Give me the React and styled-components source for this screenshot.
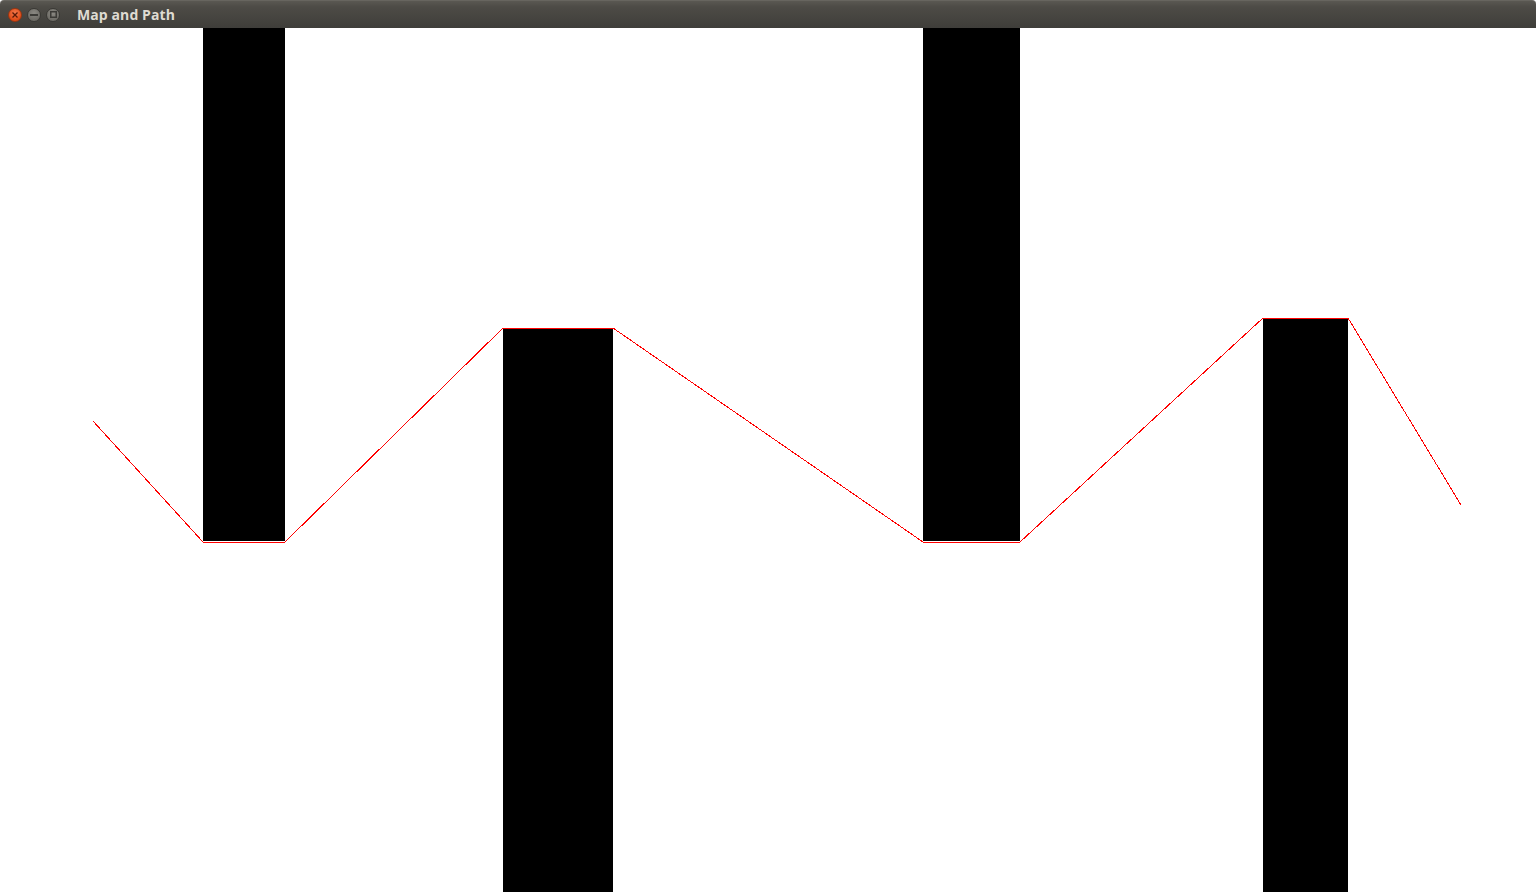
import React from "react";
import styled, { createGlobalStyle } from "styled-components";

const Global = createGlobalStyle`
  html, body { margin: 0; padding: 0; background: #ffffff; overflow: hidden; }
  #root { width: 1536px; height: 892px; }
`;

const Window = styled.div`
  width: 1536px;
  height: 892px;
  display: flex;
  flex-direction: column;
  background: #ffffff;
`;

const TitleBar = styled.div`
  height: 28px;
  flex: 0 0 28px;
  display: flex;
  align-items: center;
  padding-left: 8px;
  box-sizing: border-box;
  background: linear-gradient(#5a5852 0px, #4d4b46 6px, #3e3d39 28px);
  border-top: 1px solid #67655f;
  border-radius: 4px 4px 0 0;
`;

const Buttons = styled.div`
  display: flex;
  gap: 5px;
  align-items: center;
`;

const WinButton = styled.div`
  width: 14px;
  height: 14px;
  border-radius: 50%;
  box-sizing: border-box;
  display: flex;
  align-items: center;
  justify-content: center;
  background: ${(p) =>
    p.$close
      ? "radial-gradient(circle at 50% 35%, #f47a4e, #df4b16 70%)"
      : "radial-gradient(circle at 50% 35%, #8a8882, #6e6c66 70%)"};
  border: 1px solid ${(p) => (p.$close ? "#9c3510" : "#3a3935")};
`;

const Title = styled.div`
  margin-left: 17px;
  font-family: "Open Sans", "DejaVu Sans", sans-serif;
  font-weight: 700;
  font-size: 14px;
  color: #dfdbd2;
  letter-spacing: 0.1px;
  line-height: 28px;
`;

const Canvas = styled.svg`
  display: block;
  flex: 1;
  width: 1536px;
  height: 864px;
`;

const obstacles = [
  { x: 203, y: 0, w: 82, h: 513 },
  { x: 503, y: 300, w: 110, h: 564 },
  { x: 923, y: 0, w: 97, h: 513 },
  { x: 1263, y: 290, w: 85, h: 574 },
];

const path = [
  [93, 393],
  [203, 514],
  [285, 514],
  [503, 300],
  [613, 300],
  [923, 514],
  [1020, 514],
  [1263, 290],
  [1348, 290],
  [1461, 477],
];

export default function App() {
  return (
    <>
      <Global />
      <Window>
        <TitleBar>
          <Buttons>
            <WinButton $close>
              <svg width="6" height="6" viewBox="0 0 6 6">
                <path d="M0.5 0.5 L5.5 5.5 M5.5 0.5 L0.5 5.5" stroke="#5a1a06" strokeWidth="1.3" />
              </svg>
            </WinButton>
            <WinButton>
              <svg width="8" height="2" viewBox="0 0 8 2">
                <rect x="0" y="0" width="8" height="2" fill="#3c3b37" />
              </svg>
            </WinButton>
            <WinButton>
              <svg width="7" height="7" viewBox="0 0 7 7">
                <rect x="0.75" y="0.75" width="5.5" height="5.5" fill="none" stroke="#3c3b37" strokeWidth="1.5" />
              </svg>
            </WinButton>
          </Buttons>
          <Title>Map and Path</Title>
        </TitleBar>
        <Canvas viewBox="0 0 1536 864">
          {obstacles.map((o, i) => (
            <rect key={i} x={o.x} y={o.y} width={o.w} height={o.h} fill="#000" shapeRendering="crispEdges" />
          ))}
          <polyline
            points={path.map((p) => p.join(",")).join(" ")}
            fill="none"
            stroke="#ff0000"
            strokeWidth="1"
            shapeRendering="crispEdges"
          />
        </Canvas>
      </Window>
    </>
  );
}
